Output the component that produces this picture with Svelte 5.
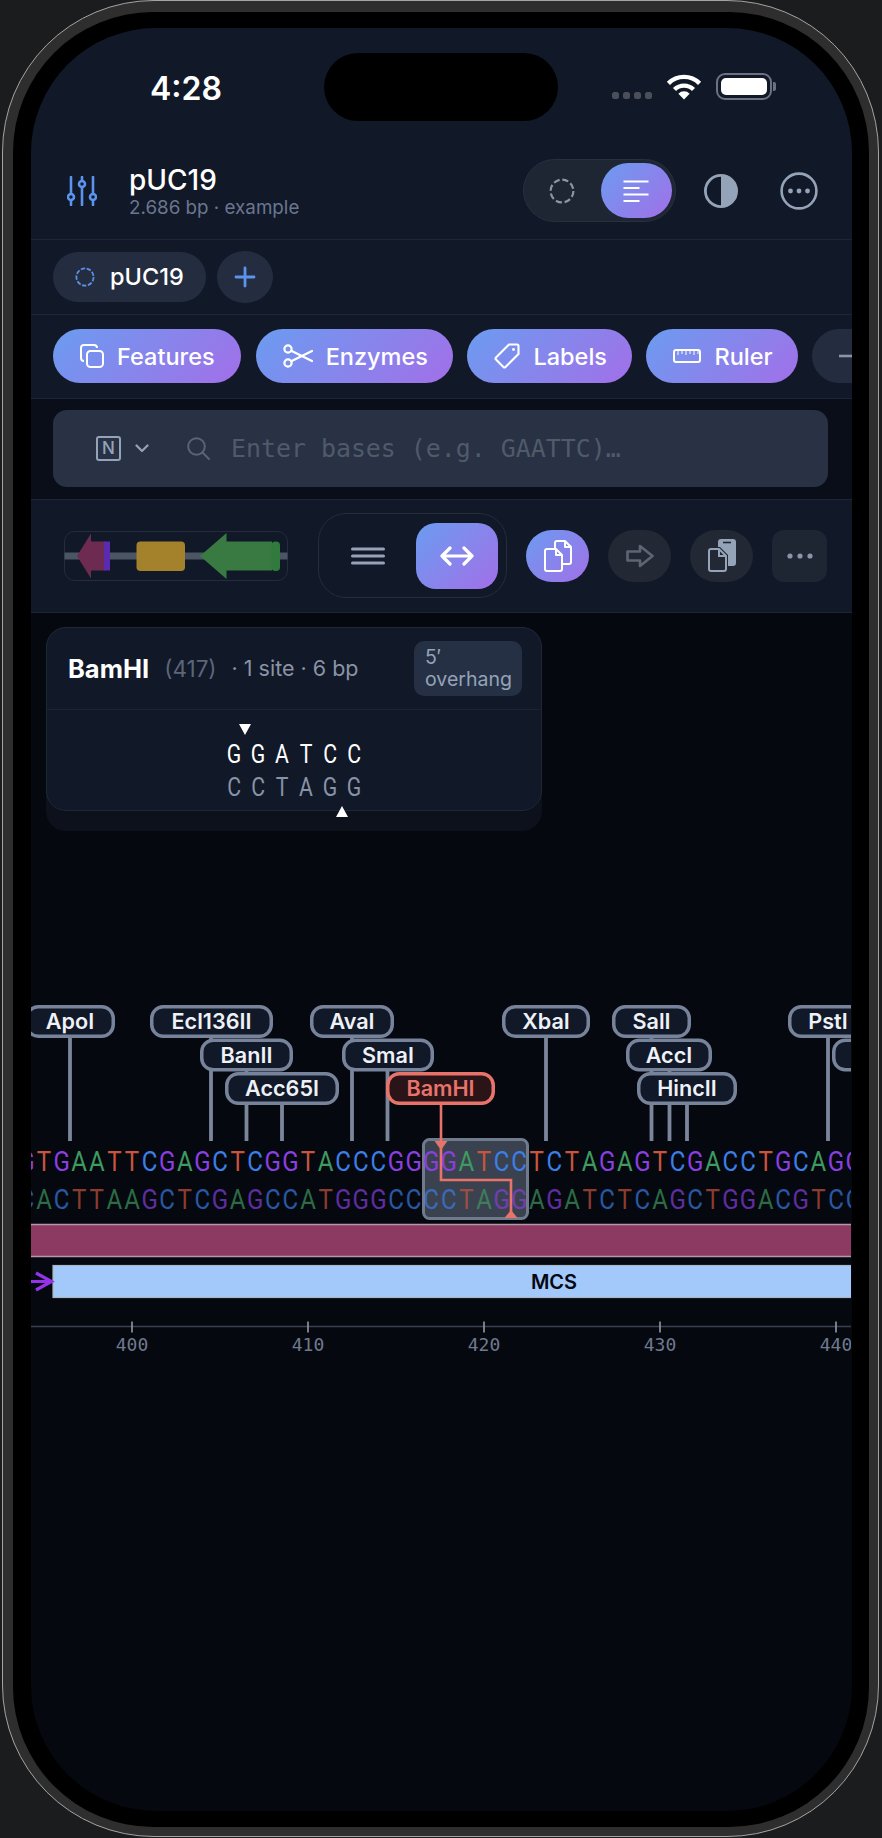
<script>
  // one base is 17.6px wide on the sequence canvas, base 400 sits at x=132
  const pitch = 17.6;
  const baseX = (n) => 132 + (n - 400) * pitch;

  const seq = 'GTGAATTCGAGCTCGGTACCCGGGGATCCTCTAGAGTCGACCTGCAGGC';
  const startPos = 394;
  const comp = { A: 'T', T: 'A', G: 'C', C: 'G' };
  const bases = seq.split('').map((b, i) => ({ top: b, bottom: comp[b], x: baseX(startPos + i) }));

  const rows = [1004, 1037.5, 1071];
  const labels = [
    { name: 'ApoI', x: 25, w: 90, row: 0, stems: [70] },
    { name: 'Ecl136II', x: 150, w: 123, row: 0, stems: [211] },
    { name: 'AvaI', x: 310, w: 84, row: 0, stems: [352] },
    { name: 'XbaI', x: 502, w: 88, row: 0, stems: [546] },
    { name: 'SalI', x: 612, w: 79, row: 0, stems: [651.5] },
    { name: 'PstI', x: 788, w: 80, row: 0, stems: [828] },
    { name: 'BanII', x: 200, w: 93, row: 1, stems: [246.5] },
    { name: 'SmaI', x: 342, w: 92, row: 1, stems: [387.5] },
    { name: 'AccI', x: 626, w: 86, row: 1, stems: [669.5] },
    { name: '', x: 832, w: 80, row: 1, stems: [] },
    { name: 'Acc65I', x: 225, w: 114, row: 2, stems: [282] },
    { name: 'HincII', x: 637, w: 100, row: 2, stems: [687] },
    { name: 'BamHI', x: 386, w: 109, row: 2, stems: [], hot: true }
  ];

  const ticks = [400, 410, 420, 430, 440];
  const siteTop = ['G', 'G', 'A', 'T', 'C', 'C'];
  const siteBottom = ['C', 'C', 'T', 'A', 'G', 'G'];
</script>

<div class="phone">
  <div class="bezel">
    <div class="screen">
      <div class="island"></div>

      <div class="status">
        <span class="time">4:28</span>
        <div class="status-right">
          <div class="signal"><i></i><i></i><i></i><i></i></div>
          <svg class="wifi" width="36" height="27" viewBox="0 0 36 27" fill="none" stroke="#fff" stroke-width="4.4">
            <path d="M2.4 10.4A22 22 0 0 1 33.6 10.4" />
            <path d="M8.5 16.5A13.5 13.5 0 0 1 27.5 16.5" />
            <path d="M18 26.5l-5.6-5.8a7.8 7.8 0 0 1 11.2 0z" fill="#fff" stroke="none" />
          </svg>
          <div class="battery"><div class="charge"></div></div>
          <div class="nub"></div>
        </div>
      </div>

      <header class="header">
        <svg width="30" height="30" viewBox="0 0 30 30" fill="none" stroke="#5b93ee" stroke-width="2.6" stroke-linecap="round">
          <path d="M4 1v17M4 24v5M15 1v4M15 11v18M26 1v17M26 24v5" />
          <circle cx="4" cy="21" r="3" />
          <circle cx="15" cy="8" r="3" />
          <circle cx="26" cy="21" r="3" />
        </svg>
        <div class="title-block">
          <div class="title">pUC19</div>
          <div class="subtitle">2.686 bp · example</div>
        </div>
        <div class="seg">
          <div class="seg-item">
            <svg width="26" height="26" viewBox="0 0 26 26" fill="none" stroke="#8b95a7" stroke-width="2.2">
              <circle cx="13" cy="13" r="11.4" stroke-dasharray="6.2 2.75" />
            </svg>
          </div>
          <div class="seg-item active">
            <svg width="26" height="22" viewBox="0 0 26 22" fill="none" stroke="#fff" stroke-width="2.2">
              <path d="M0.5 1.5h25M0.5 8h16M0.5 14.5h25M0.5 21h16" />
            </svg>
          </div>
        </div>
        <svg class="half" width="36" height="36" viewBox="0 0 36 36">
          <circle cx="18" cy="18" r="15.6" fill="none" stroke="#94a3b8" stroke-width="2.8" />
          <path d="M18 2.4a15.6 15.6 0 0 1 0 31.2z" fill="#94a3b8" />
        </svg>
        <svg class="more" width="38" height="38" viewBox="0 0 38 38" fill="none">
          <circle cx="19" cy="19" r="17.4" stroke="#94a3b8" stroke-width="2.6" />
          <circle cx="10.5" cy="19" r="2.4" fill="#94a3b8" />
          <circle cx="19" cy="19" r="2.4" fill="#94a3b8" />
          <circle cx="27.5" cy="19" r="2.4" fill="#94a3b8" />
        </svg>
      </header>

      <div class="tabs">
        <div class="tab">
          <svg width="20" height="20" viewBox="0 0 20 20" fill="none" stroke="#5b8fe8" stroke-width="1.8">
            <circle cx="10" cy="10" r="8.6" stroke-dasharray="4.4 1.6" />
          </svg>
          <span>pUC19</span>
        </div>
        <div class="add">
          <svg width="22" height="22" viewBox="0 0 22 22" stroke="#5b93ee" stroke-width="2.8" stroke-linecap="round">
            <path d="M11 2v18M2 11h18" />
          </svg>
        </div>
      </div>

      <div class="pills">
        <div class="pill">
          <svg width="24" height="24" viewBox="0 0 24 24" fill="none" stroke="#fff" stroke-width="2">
            <rect x="7" y="7" width="16" height="16" rx="3.5" />
            <path d="M4 17a3 3 0 0 1-3-3V4a3 3 0 0 1 3-3h10a3 3 0 0 1 3 3" />
          </svg>
          Features
        </div>
        <div class="pill">
          <svg width="30" height="24" viewBox="0 0 30 24" fill="none" stroke="#fff" stroke-width="2.2" stroke-linecap="round">
            <circle cx="5" cy="5" r="3.6" />
            <circle cx="5" cy="19" r="3.6" />
            <path d="M8.2 6.8L29 17M8.2 17.2L29 7" />
          </svg>
          Enzymes
        </div>
        <div class="pill">
          <svg width="26" height="26" viewBox="0 0 26 26" fill="none" stroke="#fff" stroke-width="2.1" stroke-linejoin="round">
            <path d="M15 1.5h8a1.5 1.5 0 0 1 1.5 1.5v8L11.5 24a1.5 1.5 0 0 1-2.1 0L2 16.6a1.5 1.5 0 0 1 0-2.1z" />
            <circle cx="19.5" cy="6.5" r="1.4" fill="#fff" stroke="none" />
          </svg>
          Labels
        </div>
        <div class="pill">
          <svg width="28" height="14" viewBox="0 0 28 14" fill="none" stroke="#fff" stroke-width="2">
            <rect x="1" y="1" width="26" height="12" rx="2" />
            <path d="M5 2v4M9 2v3M13 2v4M17 2v3M21 2v4M25 2v3" stroke-width="1" />
          </svg>
          Ruler
        </div>
        <div class="pill-off">
          <svg width="22" height="4" viewBox="0 0 22 4"><path d="M0 2h22" stroke="#8b95a7" stroke-width="2.6" /></svg>
        </div>
      </div>

      <div class="search-row">
        <div class="search">
          <div class="n-box">N</div>
          <svg width="14" height="9" viewBox="0 0 14 9" fill="none" stroke="#94a3b8" stroke-width="2.2" stroke-linecap="round" stroke-linejoin="round">
            <path d="M1.5 1.5L7 7l5.5-5.5" />
          </svg>
          <svg class="lens" width="23" height="23" viewBox="0 0 23 23" fill="none" stroke="#596475" stroke-width="2">
            <circle cx="9.5" cy="9.5" r="8.3" />
            <path d="M15.5 15.5l6.5 6.5" stroke-linecap="round" />
          </svg>
          <span class="placeholder">Enter bases (e.g. GAATTC)…</span>
        </div>
      </div>

      <div class="toolbar">
        <svg class="minimap" width="224" height="50" viewBox="64 530.5 224 50">
          <rect x="64.5" y="531" width="223" height="49" rx="10" fill="none" stroke="#252d3c" />
          <rect x="64.5" y="552" width="223" height="7" fill="#4b5563" />
          <path d="M77 555.5L91 533v8h14v29H91v8z" fill="#6e2b52" />
          <rect x="104" y="541" width="6" height="29" fill="#5a2bb0" />
          <rect x="136.5" y="541" width="48.5" height="29.5" rx="4" fill="#a4822b" />
          <path d="M200 555.5L226.5 532.5v8.5H272v29h-45.5v8.5z" fill="#387a41" />
          <rect x="271.5" y="541" width="8.5" height="29.5" rx="4" fill="#2f7a3c" />
        </svg>

        <div class="wrap-seg">
          <div class="wrap-item">
            <svg width="34" height="18" viewBox="0 0 34 18" stroke="#94a3b8" stroke-width="3" stroke-linecap="round">
              <path d="M1.5 2h31M1.5 9h31M1.5 16h31" />
            </svg>
          </div>
          <div class="wrap-item active">
            <svg width="34" height="22" viewBox="0 0 34 22" fill="none" stroke="#fff" stroke-width="3.2" stroke-linecap="round" stroke-linejoin="round">
              <path d="M2 11h30M10 3l-8 8 8 8M24 3l8 8-8 8" />
            </svg>
          </div>
        </div>

        <div class="tool grad">
          <svg width="28" height="32" viewBox="0 0 28 32" fill="none" stroke="#fff" stroke-width="2" stroke-linejoin="round">
            <path d="M11 9V3a2 2 0 0 1 2-2h8l6 6v15a2 2 0 0 1-2 2h-7" />
            <path d="M21 1v6h6" />
            <path d="M3 9h9l6 6v14a2 2 0 0 1-2 2H3a2 2 0 0 1-2-2V11a2 2 0 0 1 2-2z" />
            <path d="M12 9v6h6" />
          </svg>
        </div>
        <div class="tool">
          <svg width="28" height="24" viewBox="0 0 28 24" fill="none" stroke="#5f6673" stroke-width="2.6" stroke-linejoin="round">
            <path d="M1.5 7.5h12.5V2l12.5 10L14 22v-5.5H1.5z" />
          </svg>
        </div>
        <div class="tool">
          <svg width="28" height="33" viewBox="0 0 28 33" fill="none" stroke="#94a3b8" stroke-width="2">
            <path d="M10 3a3 3 0 0 1 3-3h12a3 3 0 0 1 3 3v21a3 3 0 0 1-3 3h-5V16l-8-8h-2z" fill="#94a3b8" stroke="none" />
            <path d="M15 3.5h8" stroke="#1f2632" stroke-width="1.6" />
            <path d="M3 10h8l7 7v13a2 2 0 0 1-2 2H3a2 2 0 0 1-2-2V12a2 2 0 0 1 2-2z" fill="#222834" />
            <path d="M11 10v7h7" />
          </svg>
        </div>
        <div class="tool square">
          <svg width="26" height="6" viewBox="0 0 26 6" fill="#8b95a7">
            <circle cx="3" cy="3" r="2.6" /><circle cx="13" cy="3" r="2.6" /><circle cx="23" cy="3" r="2.6" />
          </svg>
        </div>
      </div>

      <div class="viewer">
        <div class="enzyme-wrap">
          <div class="enzyme-card">
            <div class="enzyme-head">
              <span class="enzyme-name">BamHI</span>
              <span class="enzyme-pos">(417)</span>
              <span class="enzyme-meta">· 1 site · 6 bp</span>
              <span class="badge">5′ overhang</span>
            </div>
            <div class="site">
              <div class="cut cut-top"></div>
              <div class="site-row">{#each siteTop as b}<span>{b}</span>{/each}</div>
              <div class="site-row dim">{#each siteBottom as b}<span>{b}</span>{/each}</div>
              <div class="cut cut-bottom"></div>
            </div>
          </div>
        </div>

        <svg class="canvas" width="820" height="360" viewBox="31 1000 820 360">
          {#each labels as l}
            {#each l.stems as s}
              <line x1={s} x2={s} y1={rows[l.row] + 30} y2="1140" class="stem" />
            {/each}
          {/each}

          {#each labels as l}
            <rect x={l.x + 1.75} y={rows[l.row] + 1.75} width={l.w - 3.5} height="29.5" rx="11.5"
              class="tag" class:hot={l.hot} />
            {#if l.name}
              <text x={l.x + l.w / 2} y={rows[l.row] + 24} class="tag-text" class:hot={l.hot}>{l.name}</text>
            {/if}
          {/each}

          <rect x="423.5" y="1138.5" width="104" height="79" rx="6" class="sel" />

          {#each bases as b}
            <text x={b.x} y="1170" class="base {b.top}">{b.top}</text>
            <text x={b.x} y="1208" class="base {b.bottom} low">{b.bottom}</text>
          {/each}

          <!-- BamHI cut path -->
          <path d="M441 1104V1179H511V1212" class="cut-line" />
          <path d="M434.5 1140h13l-6.5 9z" fill="#e8736b" />
          <path d="M504.5 1217h13l-6.5-8z" fill="#e8736b" />

          <rect x="31" y="1223.5" width="820" height="32" fill="#8c3a62" />
          <path d="M31 1223.5h820M31 1255.5h820" stroke="#b39aa8" stroke-width="1.6" />

          <rect x="53" y="1264.5" width="800" height="32" fill="#a3c9fa" stroke="#a9b4c4" stroke-width="1.2" />
          <text x="554" y="1287.5" class="mcs">MCS</text>
          <path d="M31 1280.5H50M36 1272l15.5 8.5L36 1289" fill="none" stroke="#9333ea" stroke-width="3.2" />

          <line x1="31" x2="851" y1="1325.5" y2="1325.5" stroke="#3a4150" stroke-width="1.6" />
          {#each ticks as t}
            <line x1={baseX(t)} x2={baseX(t)} y1="1320.5" y2="1331.5" stroke="#9ca3af" stroke-width="1.5" />
            <text x={baseX(t)} y="1350" class="tick">{t}</text>
          {/each}
        </svg>
      </div>
    </div>
  </div>
</div>

<style>
  :global(body) {
    margin: 0;
    background: #1b1c1e;
    font-family: Inter, "Liberation Sans", sans-serif;
  }

  .phone {
    box-sizing: border-box;
    width: 877px;
    height: 1837px;
    margin-left: 2px;
    padding: 10.5px 9px 9px 10px;
    border: 1.5px solid #a4a4a4;
    border-radius: 152px;
    background: #2e2e2e;
  }

  .bezel {
    box-sizing: border-box;
    height: 100%;
    padding: 16px 17px 16px 18px;
    border-radius: 140px;
    background: #000;
  }

  .screen {
    position: relative;
    height: 100%;
    overflow: hidden;
    border-radius: 125px;
    background: #05080f;
    color: #fff;
  }

  .island {
    position: absolute;
    left: 293px;
    top: 25px;
    width: 234px;
    height: 68px;
    border-radius: 34px;
    background: #000;
  }

  .status {
    display: flex;
    justify-content: space-between;
    height: 115px;
    background: #111827;
  }

  .time {
    margin: 43px 0 0 119px;
    font-size: 32px;
    line-height: 36px;
    font-weight: 600;
  }

  .status-right {
    display: flex;
    align-items: flex-start;
    margin: 45px 76px 0 0;
  }

  .signal {
    display: flex;
    gap: 4px;
    margin: 19px 14px 0 0;
  }

  .signal i {
    width: 7px;
    height: 7px;
    border-radius: 2.5px;
    background: #4a4f5a;
  }

  .battery {
    box-sizing: border-box;
    width: 56px;
    height: 27px;
    margin-left: 14px;
    padding: 3px;
    border: 2.5px solid #6b7280;
    border-radius: 9px;
  }

  .charge {
    height: 100%;
    border-radius: 5px;
    background: #fff;
  }

  .nub {
    width: 3px;
    height: 9px;
    margin: 9px 0 0 1px;
    border-radius: 0 2px 2px 0;
    background: #6b7280;
  }

  .header {
    display: flex;
    align-items: center;
    height: 96px;
    padding: 0 34px 0 36px;
    border-bottom: 1px solid #1e2636;
    background: #111827;
  }

  .title-block {
    margin-left: 32px;
    padding-top: 2px;
    flex: 1;
  }

  .title {
    font-size: 28px;
    line-height: 30px;
    font-weight: 500;
  }

  .subtitle {
    margin-top: 2px;
    font-size: 18.8px;
    line-height: 22px;
    color: #6b7690;
  }

  .seg {
    box-sizing: border-box;
    display: flex;
    width: 153px;
    height: 63px;
    padding: 3px;
    border: 1px solid #283040;
    border-radius: 32px;
    background: #1e2533;
  }

  .seg-item {
    display: flex;
    align-items: center;
    justify-content: center;
    flex: 1;
    padding-right: 4px;
  }

  .seg-item.active {
    flex: 0 0 71px;
    padding-right: 0;
    border-radius: 28px;
    background: linear-gradient(135deg, #6b9cf0, #a26fe8);
  }

  .half {
    margin-left: 27.5px;
  }

  .more {
    margin-left: 41px;
  }

  .tabs {
    display: flex;
    align-items: center;
    gap: 11px;
    height: 74px;
    padding-left: 22px;
    border-bottom: 1px solid #1e2636;
    background: #111827;
  }

  .tab {
    display: flex;
    align-items: center;
    gap: 15px;
    height: 50px;
    padding: 0 22px;
    border-radius: 25px;
    background: #242d3f;
    font-size: 23.5px;
    font-weight: 500;
  }

  .add {
    display: flex;
    align-items: center;
    justify-content: center;
    width: 56px;
    height: 52px;
    border-radius: 50%;
    background: #242d3f;
  }

  .pills {
    display: flex;
    align-items: center;
    gap: 14.5px;
    height: 83px;
    padding-left: 22px;
    overflow: hidden;
    border-bottom: 1px solid #1e2636;
    background: #111827;
  }

  .pill {
    display: flex;
    align-items: center;
    flex: none;
    gap: 13px;
    height: 54px;
    padding: 0 25px 0 27px;
    border-radius: 27px;
    background: linear-gradient(135deg, #6b9cf0, #a26fe8);
    font-size: 23.5px;
    font-weight: 500;
  }

  .pill:first-child {
    padding-right: 26.5px;
  }

  .pill-off {
    display: flex;
    align-items: center;
    flex: none;
    width: 80px;
    height: 54px;
    padding-left: 27px;
    box-sizing: border-box;
    border-radius: 27px;
    background: #242d3f;
  }

  .search-row {
    height: 78px;
    padding: 11px 24px 11px 22px;
    border-bottom: 1px solid #1e2636;
    background: #0a0e18;
  }

  .search {
    display: flex;
    align-items: center;
    height: 77px;
    padding-left: 43px;
    border-radius: 14px;
    background: #283244;
  }

  .n-box {
    box-sizing: border-box;
    width: 25px;
    height: 25px;
    border: 2px solid #94a3b8;
    border-radius: 3px;
    color: #94a3b8;
    font-size: 17px;
    line-height: 21px;
    font-weight: 500;
    text-align: center;
  }

  .search svg:first-of-type {
    margin-left: 14px;
  }

  .lens {
    margin-left: 38px;
  }

  .placeholder {
    margin-left: 21px;
    font-family: "DejaVu Sans Mono", monospace;
    font-size: 24.9px;
    color: #4f5a6b;
  }

  .toolbar {
    display: flex;
    align-items: center;
    height: 112px;
    padding-left: 33px;
    border-bottom: 1px solid #1e2636;
    background: #111827;
  }

  .wrap-seg {
    box-sizing: border-box;
    display: flex;
    align-items: center;
    width: 189px;
    height: 85px;
    margin-left: 30px;
    padding-right: 8px;
    border: 1.5px solid #252d3c;
    border-radius: 28px;
  }

  .wrap-item {
    display: flex;
    align-items: center;
    justify-content: center;
    flex: 1;
  }

  .wrap-item.active {
    flex: 0 0 82px;
    height: 66px;
    border-radius: 20px;
    background: linear-gradient(135deg, #6b9cf0, #a26fe8);
  }

  .tool {
    display: flex;
    align-items: center;
    justify-content: center;
    width: 63px;
    height: 52px;
    margin-left: 19px;
    border-radius: 26px;
    background: #222834;
  }

  .tool.grad {
    background: linear-gradient(135deg, #6b9cf0, #a26fe8);
  }

  .tool.square {
    width: 55px;
    border-radius: 12px;
    background: #1e2533;
  }

  .enzyme-wrap {
    height: 204px;
    width: 496px;
    margin: 14px 0 0 15px;
    border-radius: 20px;
    background: #0c111c;
  }

  .enzyme-card {
    box-sizing: border-box;
    height: 184px;
    border: 1px solid #1f2737;
    border-radius: 20px;
    background: #111827;
  }

  .enzyme-head {
    display: flex;
    align-items: center;
    height: 81px;
    padding: 0 19px 0 21px;
    border-bottom: 1px solid #1c2433;
  }

  .enzyme-name {
    font-size: 25.5px;
    font-weight: 700;
  }

  .enzyme-pos {
    margin-left: 15px;
    font-size: 22.5px;
    color: #5b667a;
  }

  .enzyme-meta {
    flex: 1;
    margin-left: 15px;
    font-size: 21.5px;
    color: #8a94a6;
  }

  .badge {
    box-sizing: border-box;
    width: 108px;
    padding: 5px 11px;
    border-radius: 10px;
    background: #263044;
    color: #94a3b8;
    font-size: 19.5px;
    line-height: 22.5px;
  }

  .site {
    position: relative;
    padding-top: 28px;
  }

  .site-row {
    display: flex;
    justify-content: center;
    font-family: Roboto, sans-serif;
    font-size: 25px;
    line-height: 33px;
    font-weight: 400;
  }

  .site-row span {
    width: 24.1px;
    text-align: center;
    transform: scaleX(0.85);
  }

  .site-row.dim {
    color: #8793a8;
  }

  .cut {
    position: absolute;
    width: 0;
    height: 0;
    border-left: 6.5px solid transparent;
    border-right: 6.5px solid transparent;
  }

  .cut-top {
    left: 192px;
    top: 14px;
    border-top: 11px solid #fff;
  }

  .cut-bottom {
    left: 289px;
    top: 96.5px;
    border-bottom: 11px solid #fff;
  }

  .canvas {
    display: block;
    margin-top: 170px;
  }

  .stem {
    stroke: #7c869b;
    stroke-width: 3.8;
  }

  .tag {
    fill: #111827;
    stroke: #77839a;
    stroke-width: 3.5;
  }

  .tag.hot {
    fill: #2a1418;
    stroke: #e8736b;
  }

  .tag-text {
    font-family: Inter, sans-serif;
    font-size: 21.6px;
    font-weight: 600;
    fill: #eef1f6;
    text-anchor: middle;
  }

  .tag-text.hot {
    fill: #e8736b;
  }

  .sel {
    fill: rgba(148, 163, 184, 0.38);
    stroke: #6f7a8d;
    stroke-width: 3;
  }

  .base {
    font-family: Roboto, sans-serif;
    font-size: 28px;
    text-anchor: middle;
    transform-box: fill-box;
    transform-origin: center;
    transform: scaleX(0.86);
  }

  .base.low {
    opacity: 0.68;
  }

  .A {
    fill: #3f9a5f;
  }

  .T {
    fill: #c9553e;
  }

  .G {
    fill: #8a3fe0;
  }

  .C {
    fill: #3b7fe6;
  }

  .cut-line {
    fill: none;
    stroke: #e8736b;
    stroke-width: 2.6;
  }

  .mcs {
    font-family: Inter, sans-serif;
    font-size: 20px;
    font-weight: 600;
    fill: #050811;
    text-anchor: middle;
  }

  .tick {
    font-family: "DejaVu Sans Mono", monospace;
    font-size: 18px;
    fill: #6f7a8e;
    text-anchor: middle;
  }
</style>
